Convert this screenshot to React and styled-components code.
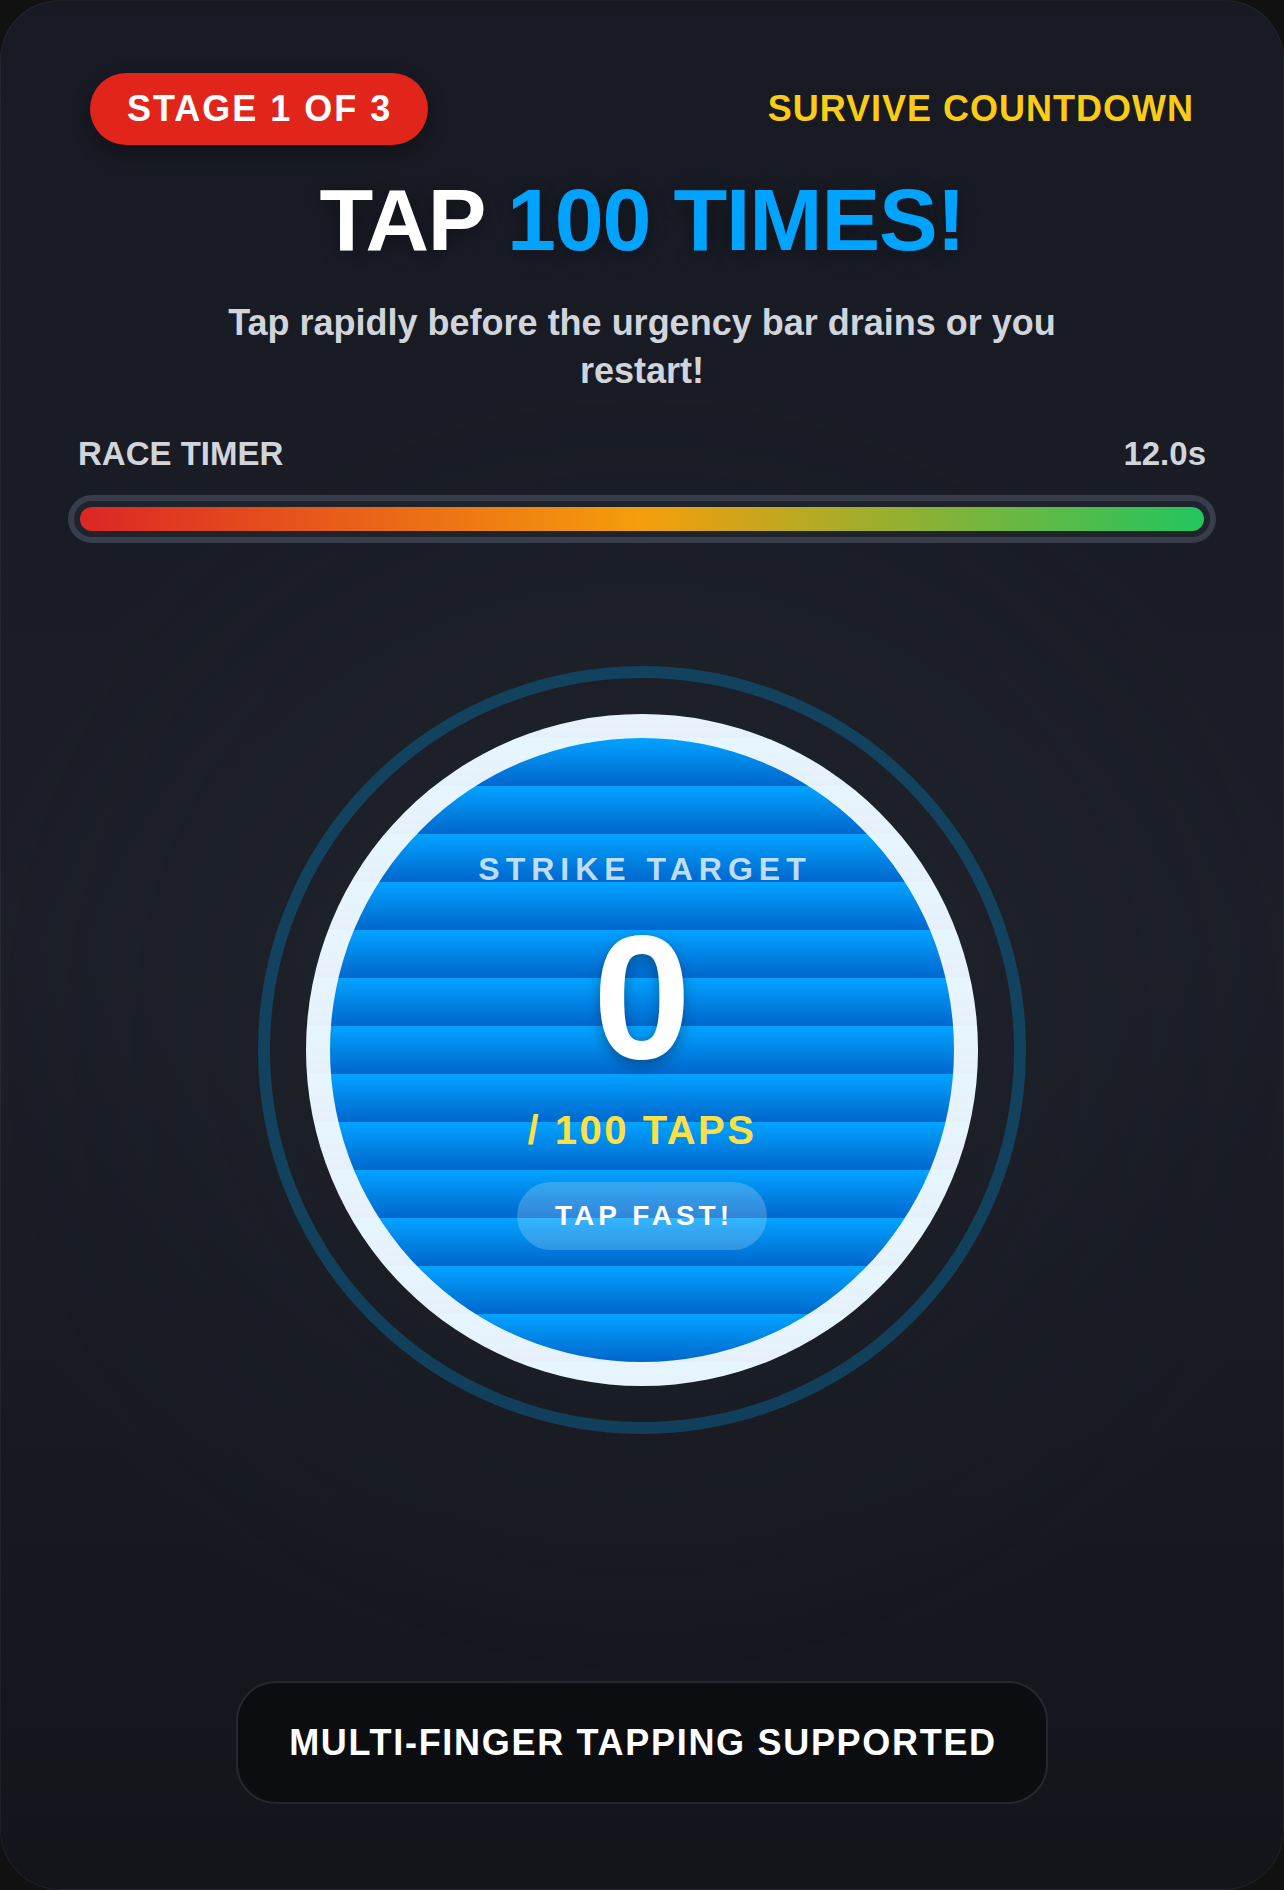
import React, { useState } from "react";
import styled, { createGlobalStyle } from "styled-components";

const GlobalStyle = createGlobalStyle`
  * {
    box-sizing: border-box;
  }

  body {
    margin: 0;
    background: #111111;
    font-family: "Liberation Sans", Arial, sans-serif;
  }
`;

const Card = styled.div`
  display: flex;
  flex-direction: column;
  align-items: stretch;
  min-height: 100vh;
  padding: 72px 67px 85px;
  border: 1px solid rgba(255, 255, 255, 0.05);
  border-radius: 60px;
  background:
    radial-gradient(circle at 50% 55%, rgba(40, 44, 56, 0.35), transparent 55%),
    linear-gradient(180deg, #171a23 0%, #1b1e26 50%, #13151b 100%);
  overflow: hidden;
`;

const Header = styled.div`
  display: flex;
  align-items: center;
  justify-content: space-between;
  padding: 0 22px;
`;

const StageBadge = styled.div`
  padding: 15px 36px 15px 37px;
  border-radius: 999px;
  background: #e1251b;
  box-shadow: 0 8px 20px rgba(0, 0, 0, 0.3);
  color: #ffffff;
  font-size: 36px;
  line-height: 42px;
  font-weight: 700;
  letter-spacing: 2px;
`;

const Mode = styled.div`
  color: #facc15;
  font-size: 36px;
  line-height: 42px;
  font-weight: 700;
  letter-spacing: 1px;
`;

const Title = styled.h1`
  margin: 31px 0 0;
  text-align: center;
  color: #ffffff;
  font-size: 88px;
  line-height: 1;
  font-weight: 700;
  letter-spacing: -1.2px;
  text-shadow: 0 4px 20px rgba(0, 0, 0, 0.3);
`;

const Accent = styled.span`
  color: #00a3ff;
`;

const Subtitle = styled.p`
  max-width: 860px;
  margin: 35px auto 0;
  text-align: center;
  color: #d1d5db;
  font-size: 36px;
  line-height: 48px;
  font-weight: 700;
`;

const TimerRow = styled.div`
  display: flex;
  justify-content: space-between;
  margin-top: 40px;
  padding: 0 10px;
  color: #d1d5db;
  font-size: 33px;
  line-height: 38px;
  font-weight: 700;
`;

const Track = styled.div`
  margin-top: 22px;
  padding: 6px;
  border: 6px solid #373d4b;
  border-radius: 999px;
  background: #1f232c;
`;

const Fill = styled.div`
  height: 24px;
  border-radius: 12px;
  background: linear-gradient(90deg, #dc2626 0%, #f59e0b 50%, #22c55e 100%);
`;

const Ring = styled.div`
  align-self: center;
  margin-top: 123px;
  padding: 36px;
  border: 12px solid rgba(2, 132, 199, 0.35);
  border-radius: 50%;
`;

const TapButton = styled.button`
  display: flex;
  flex-direction: column;
  align-items: center;
  justify-content: center;
  width: 672px;
  height: 672px;
  padding: 0;
  border: 24px solid rgba(255, 255, 255, 0.9);
  border-radius: 50%;
  background: repeating-linear-gradient(180deg, #00a3ff 0px, #0067cd 48px);
  font-family: inherit;
  cursor: pointer;
`;

const TargetLabel = styled.div`
  color: rgba(255, 255, 255, 0.75);
  font-size: 32px;
  line-height: 1.2;
  font-weight: 700;
  letter-spacing: 6px;
  margin-right: -6px;
`;

const Count = styled.div`
  margin-top: 21px;
  color: #ffffff;
  font-size: 176px;
  line-height: 1;
  font-weight: 700;
  text-shadow: 0 6px 14px rgba(0, 0, 0, 0.3);
`;

const Goal = styled.div`
  margin-top: 21px;
  color: #fde047;
  font-size: 40px;
  line-height: 1.2;
  font-weight: 700;
  letter-spacing: 2.5px;
`;

const Hint = styled.div`
  margin-top: 28px;
  padding: 17px 34px 17px 38px;
  border-radius: 999px;
  background: rgba(255, 255, 255, 0.2);
  color: #ffffff;
  font-size: 28px;
  line-height: 1.2;
  font-weight: 700;
  letter-spacing: 4px;
`;

const Footer = styled.div`
  align-self: center;
  margin-top: auto;
  padding: 38px 49px 38px 51px;
  border: 2px solid #26282d;
  border-radius: 40px;
  background: #0c0d11;
  color: #ffffff;
  font-size: 36px;
  line-height: 1.2;
  font-weight: 700;
  letter-spacing: 1.7px;
`;

export default function App() {
  const [taps, setTaps] = useState(0);
  const goal = 100;

  return (
    <>
      <GlobalStyle />
      <Card>
        <Header>
          <StageBadge>STAGE 1 OF 3</StageBadge>
          <Mode>SURVIVE COUNTDOWN</Mode>
        </Header>

        <Title>
          TAP <Accent>{goal} TIMES!</Accent>
        </Title>
        <Subtitle>Tap rapidly before the urgency bar drains or you restart!</Subtitle>

        <TimerRow>
          <span>RACE TIMER</span>
          <span>12.0s</span>
        </TimerRow>
        <Track>
          <Fill style={{ width: "100%" }} />
        </Track>

        <Ring>
          <TapButton onClick={() => setTaps((t) => Math.min(t + 1, goal))}>
            <TargetLabel>STRIKE TARGET</TargetLabel>
            <Count>{taps}</Count>
            <Goal>/ {goal} TAPS</Goal>
            <Hint>TAP FAST!</Hint>
          </TapButton>
        </Ring>

        <Footer>MULTI-FINGER TAPPING SUPPORTED</Footer>
      </Card>
    </>
  );
}
